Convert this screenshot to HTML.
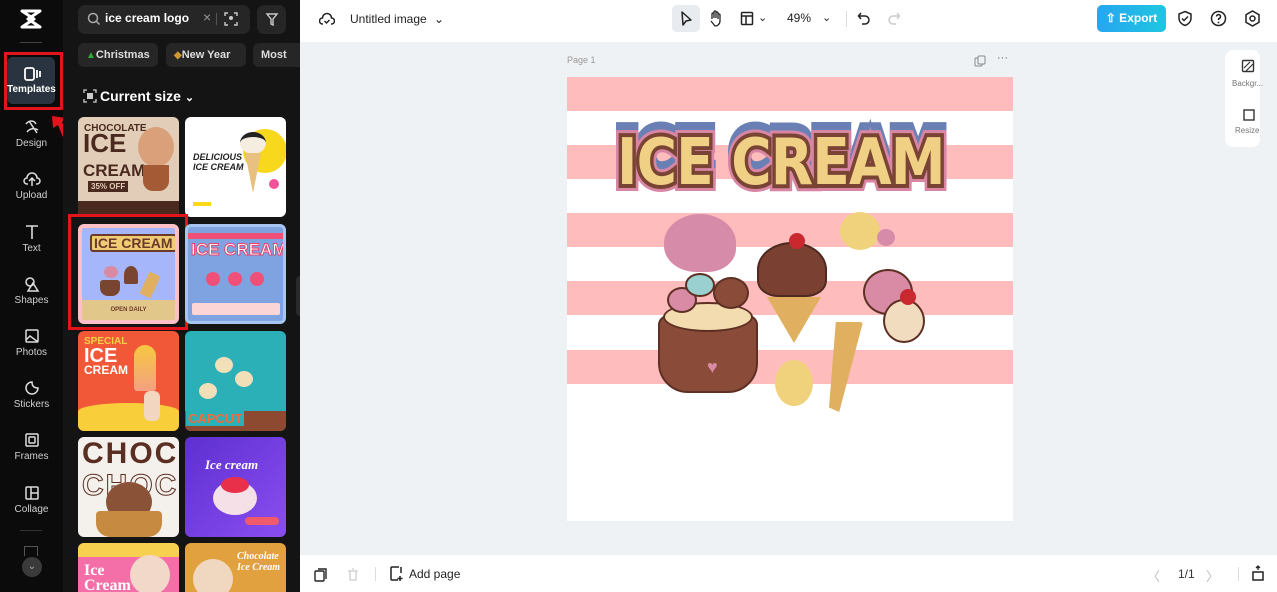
<!DOCTYPE html>
<html><head><meta charset="utf-8"><style>
*{box-sizing:border-box;margin:0;padding:0}
html,body{width:1277px;height:592px;overflow:hidden}
body{font-family:"Liberation Sans",sans-serif;background:#eff2f5;position:relative}
.abs{position:absolute}
#nav{left:0;top:0;width:63px;height:592px;background:#0b0b0b}
#panel{left:63px;top:0;width:237px;height:592px;background:#141414;overflow:hidden}
.ni{position:absolute;left:0;width:63px;text-align:center;color:#d0d0d0;font-size:10px}
.ni svg{display:block;margin:0 auto 2px}
.th{position:absolute;width:101px;height:100px;border-radius:6px;overflow:hidden}
.chip{position:absolute;top:43px;height:24px;border-radius:6px;background:#262626;color:#ddd;font-size:11px;font-weight:bold;line-height:24px;padding:0 8px;white-space:nowrap;overflow:hidden}
#top{left:300px;top:0;width:977px;height:42px;background:#fff}
#bot{left:300px;top:555px;width:977px;height:37px;background:#fff}
.stripe{position:absolute;left:0;width:446px;height:34px;background:#febcbd}
.tt{position:absolute;left:50px;top:46px;font-family:'DejaVu Sans',sans-serif;font-weight:bold;font-size:64px;line-height:80px;letter-spacing:-1px;transform:scaleX(0.86);transform-origin:0 0;white-space:nowrap}
</style></head><body>
<div id="nav" class="abs">
 <svg class="abs" style="left:19px;top:8px" width="24" height="22" viewBox="0 0 24 22"><path d="M3 3h18L9 11l12 8H3l12-8z" fill="none" stroke="#fff" stroke-width="3" stroke-linejoin="round"/></svg>
 <div class="abs" style="left:20px;top:42px;width:22px;height:1px;background:#444"></div>
 <div class="abs" style="left:4px;top:52px;width:59px;height:58px;border:3px solid #e3141c"></div>
 <div class="abs" style="left:7px;top:57px;width:48px;height:47px;border-radius:6px;background:#2a3440"></div>
 <div class="ni" style="top:66px;color:#fff;font-weight:bold;font-size:10px"><svg width="18" height="16" viewBox="0 0 18 16"><rect x="2" y="2" width="9" height="12" rx="2" fill="none" stroke="#fff" stroke-width="1.8"/><path d="M14 4v8M17 5v6" stroke="#fff" stroke-width="1.8"/></svg>Templates</div>
 <svg class="abs" style="left:48px;top:112px" width="26" height="38" viewBox="0 0 26 38"><path d="M4 4l14 2-4 4 10 22-5 3-9-22-5 3z" fill="#e3141c"/></svg>
 <div class="ni" style="top:118px"><svg width="18" height="18" viewBox="0 0 18 18"><path d="M3 6c3-4 8-4 10 0M4 14c3-4 8-4 11-2M6 3l8 12" stroke="#ddd" fill="none" stroke-width="1.5"/></svg>Design</div>
 <div class="ni" style="top:170px"><svg width="18" height="18" viewBox="0 0 18 18"><path d="M5 14H4a3 3 0 0 1 0-6 5 5 0 0 1 10 0 3 3 0 0 1 0 6h-1M9 9v7M6 11l3-3 3 3" stroke="#ddd" fill="none" stroke-width="1.5"/></svg>Upload</div>
 <div class="ni" style="top:223px"><svg width="18" height="18" viewBox="0 0 18 18"><path d="M3 3h12M9 3v13" stroke="#ddd" fill="none" stroke-width="1.6"/></svg>Text</div>
 <div class="ni" style="top:275px"><svg width="18" height="18" viewBox="0 0 18 18"><circle cx="7" cy="7" r="4" stroke="#ddd" fill="none" stroke-width="1.5"/><path d="M10 8l5 8H5z" stroke="#ddd" fill="none" stroke-width="1.5"/></svg>Shapes</div>
 <div class="ni" style="top:327px"><svg width="18" height="18" viewBox="0 0 18 18"><rect x="3" y="3" width="12" height="12" rx="1" stroke="#ddd" fill="none" stroke-width="1.5"/><path d="M3 13l4-4 8 6" stroke="#ddd" fill="none" stroke-width="1.5"/></svg>Photos</div>
 <div class="ni" style="top:379px"><svg width="18" height="18" viewBox="0 0 18 18"><path d="M15 9a6 6 0 1 1-6-6c0 4 2 6 6 6z" stroke="#ddd" fill="none" stroke-width="1.5"/></svg>Stickers</div>
 <div class="ni" style="top:431px"><svg width="18" height="18" viewBox="0 0 18 18"><rect x="3" y="3" width="12" height="12" rx="1" stroke="#ddd" fill="none" stroke-width="1.5"/><rect x="6" y="6" width="6" height="6" rx="1" stroke="#ddd" fill="none" stroke-width="1.5"/></svg>Frames</div>
 <div class="ni" style="top:484px"><svg width="18" height="18" viewBox="0 0 18 18"><rect x="3" y="3" width="12" height="12" rx="1" stroke="#ddd" fill="none" stroke-width="1.5"/><path d="M8 3v12M8 9h7" stroke="#ddd" stroke-width="1.5"/></svg>Collage</div>
 <div class="abs" style="left:20px;top:530px;width:22px;height:1px;background:#333"></div>
 <div class="abs" style="left:24px;top:546px;width:14px;height:10px;border:1.5px solid #555;border-bottom:none"></div>
 <div class="abs" style="left:22px;top:557px;width:20px;height:20px;border-radius:50%;background:#3a3a3a;color:#aaa;font-size:10px;text-align:center;line-height:20px">⌄</div>
</div>
<div id="panel" class="abs">
 <div class="abs" style="left:15px;top:5px;width:172px;height:29px;border-radius:7px;background:#262626"></div>
 <svg class="abs" style="left:24px;top:12px" width="14" height="14"><circle cx="6" cy="6" r="4.5" stroke="#aaa" fill="none" stroke-width="1.5"/><path d="M9.5 9.5l3 3" stroke="#aaa" stroke-width="1.5"/></svg>
 <div class="abs" style="left:42px;top:11px;color:#fff;font-size:12px;font-weight:bold">ice cream logo</div>
 <div class="abs" style="left:140px;top:9px;color:#999;font-size:14px">×</div>
 <div class="abs" style="left:153px;top:13px;width:1px;height:12px;background:#555"></div>
 <svg class="abs" style="left:161px;top:12px" width="14" height="14"><path d="M1 4V1h3M10 1h3v3M13 10v3h-3M4 13H1v-3" stroke="#ccc" fill="none" stroke-width="1.4"/><circle cx="7" cy="6" r="2" fill="#ccc"/></svg>
 <div class="abs" style="left:194px;top:5px;width:29px;height:29px;border-radius:7px;background:#262626"></div>
 <svg class="abs" style="left:201px;top:12px" width="15" height="15"><path d="M3 2h10l-4 5v6l-2-1V7z" stroke="#ccc" fill="none" stroke-width="1.4"/></svg>
 <div class="chip" style="left:15px;width:80px"><span style="color:#3a3;font-size:10px">▲</span>Christmas</div>
 <div class="chip" style="left:103px;width:80px"><span style="color:#c93;font-size:10px">◆</span>New Year</div>
 <div class="chip" style="left:190px;width:60px">Most</div>
 <svg class="abs" style="left:20px;top:89px" width="14" height="14"><path d="M1 4V1h3M10 1h3v3M13 10v3h-3M4 13H1v-3" stroke="#ccc" fill="none" stroke-width="1.3"/><rect x="4" y="4" width="6" height="6" fill="#ccc"/></svg>
 <div class="abs" style="left:37px;top:88px;color:#fff;font-size:14px;font-weight:bold">Current size <span style="font-size:11px">⌄</span></div>
 <div class="th" style="left:15px;top:117px;background:#e2cdb8">
  <div style="position:absolute;left:6px;top:6px;color:#4a2a1e;font-weight:900;font-size:10px">CHOCOLATE</div>
  <div style="position:absolute;left:5px;top:14px;color:#4a2a1e;font-weight:900;font-size:26px;line-height:24px">ICE<br><span style="font-size:17px">CREAM</span></div>
  <div style="position:absolute;left:10px;top:64px;background:#4a2a1e;color:#e2cdb8;font-size:8px;font-weight:bold;padding:1px 3px">35% OFF</div>
  <div style="position:absolute;left:60px;top:10px;width:36px;height:40px;border-radius:50%;background:#d9a07a"></div>
  <div style="position:absolute;left:65px;top:48px;width:26px;height:26px;background:#a35a35;border-radius:0 0 10px 10px"></div>
  <div style="position:absolute;left:0;top:84px;width:101px;height:16px;background:#4a2a1e"></div>
 </div>
 <div class="th" style="left:122px;top:117px;background:#fff">
  <div style="position:absolute;left:58px;top:12px;width:44px;height:44px;border-radius:50%;background:#f8d81c"></div>
  <div style="position:absolute;left:8px;top:35px;font-style:italic;font-weight:900;font-size:9px;color:#222;line-height:10px">DELICIOUS<br>ICE CREAM</div>
  <div style="position:absolute;left:55px;top:15px;width:26px;height:22px;border-radius:50%;background:#f4ede0;border-top:5px solid #222"></div>
  <div style="position:absolute;left:60px;top:36px;width:0;height:0;border-left:8px solid transparent;border-right:8px solid transparent;border-top:40px solid #e8c080"></div>
  <div style="position:absolute;left:84px;top:62px;width:10px;height:10px;border-radius:50%;background:#f4539a"></div>
  <div style="position:absolute;left:8px;top:85px;width:18px;height:4px;background:#f8d81c"></div>
 </div>
 <div class="abs" style="left:5px;top:214px;width:120px;height:116px;border:3px solid #e3141c"></div>
 <div class="th" style="left:15px;top:224px;background:#a5b7fa;border:4px solid #fec0c5">
  <div style="position:absolute;left:8px;top:6px;background:#f0cc74;color:#6b3a2a;font-weight:900;font-size:14px;padding:0 2px;border:2px solid #6b3a2a;border-radius:3px;line-height:14px;white-space:nowrap">ICE CREAM</div>
  <div style="position:absolute;left:22px;top:38px;width:14px;height:12px;border-radius:50%;background:#d98aa5"></div>
  <div style="position:absolute;left:18px;top:52px;width:20px;height:16px;border-radius:3px 3px 8px 8px;background:#7a4530"></div>
  <div style="position:absolute;left:42px;top:38px;width:14px;height:18px;border-radius:50% 50% 2px 2px;background:#7a4530"></div>
  <div style="position:absolute;left:62px;top:45px;width:12px;height:24px;background:#e0b060;transform:rotate(25deg)"></div>
  <div style="position:absolute;left:0;top:72px;width:93px;height:20px;background:#e2c78a;font-size:6px;font-weight:bold;color:#6b3a2a;text-align:center;line-height:20px">OPEN DAILY</div>
 </div>
 <div class="th" style="left:122px;top:224px;background:#7fa3e0;border:3px solid #a8c4f0">
  <div style="position:absolute;left:0;top:6px;width:96px;height:6px;background:#f05078"></div>
  <div style="position:absolute;left:3px;top:13px;color:#fff;font-weight:900;font-size:17px;-webkit-text-stroke:1px #e8446e;line-height:20px;white-space:nowrap">ICE CREAM</div>
  <div style="position:absolute;left:18px;top:45px;width:14px;height:14px;border-radius:50%;background:#f05078"></div>
  <div style="position:absolute;left:40px;top:45px;width:14px;height:14px;border-radius:50%;background:#f05078"></div>
  <div style="position:absolute;left:62px;top:45px;width:14px;height:14px;border-radius:50%;background:#f05078"></div>
  <div style="position:absolute;left:4px;top:76px;width:88px;height:12px;background:#fcd6d6;border-radius:2px"></div>
 </div>
 <div class="th" style="left:15px;top:331px;background:#f05838">
  <div style="position:absolute;left:6px;top:6px;color:#f8d04a;font-weight:900;font-size:10px;line-height:10px">SPECIAL<br><span style="color:#fff;font-size:20px;line-height:18px">ICE</span><br><span style="color:#fff;font-size:12px">CREAM</span></div>
  <div style="position:absolute;left:56px;top:14px;width:22px;height:46px;border-radius:11px 11px 3px 3px;background:linear-gradient(#f7c840,#f3a080)"></div>
  <div style="position:absolute;left:0;top:72px;width:101px;height:28px;background:#f8cf3a;border-radius:50% 50% 0 0/30% 30% 0 0"></div>
  <div style="position:absolute;left:66px;top:60px;width:16px;height:30px;background:#f3d6c0;border-radius:6px"></div>
 </div>
 <div class="th" style="left:122px;top:331px;background:#2cb0b8">
  <div style="position:absolute;left:30px;top:26px;width:18px;height:16px;border-radius:50%;background:#f1dfb8"></div>
  <div style="position:absolute;left:50px;top:40px;width:18px;height:16px;border-radius:50%;background:#f1dfb8"></div>
  <div style="position:absolute;left:14px;top:52px;width:18px;height:16px;border-radius:50%;background:#f1dfb8"></div>
  <div style="position:absolute;left:0;top:80px;width:101px;height:20px;background:#8e4a30"></div>
  <div style="position:absolute;left:1px;top:80px;color:#f26c3c;font-weight:900;font-size:13px;background:#2cb0b8;padding:0 2px">CAPCUT</div>
 </div>
 <div class="th" style="left:15px;top:437px;background:#f4f0ec">
  <div style="position:absolute;left:4px;top:0;color:#5a2f22;font-weight:900;font-size:30px;letter-spacing:2px;white-space:nowrap">CHOCO</div>
  <div style="position:absolute;left:4px;top:32px;color:#f4f0ec;-webkit-text-stroke:1px #5a2f22;font-weight:900;font-size:30px;letter-spacing:2px;white-space:nowrap">CHOCO</div>
  <div style="position:absolute;left:28px;top:45px;width:46px;height:40px;border-radius:50%;background:#8a5338"></div>
  <div style="position:absolute;left:18px;top:74px;width:66px;height:26px;background:#c68b40;border-radius:4px 4px 14px 14px"></div>
 </div>
 <div class="th" style="left:122px;top:437px;background:linear-gradient(135deg,#5e2fd0,#8a4ef0)">
  <div style="position:absolute;left:20px;top:20px;color:#fff;font-style:italic;font-weight:bold;font-size:13px;font-family:'Liberation Serif',serif">Ice cream</div>
  <div style="position:absolute;left:28px;top:44px;width:44px;height:34px;border-radius:50%;background:#f5e0e8"></div>
  <div style="position:absolute;left:36px;top:40px;width:28px;height:16px;border-radius:50%;background:#e8304a"></div>
  <div style="position:absolute;left:60px;top:80px;width:34px;height:8px;border-radius:4px;background:#f05a6a"></div>
 </div>
 <div class="th" style="left:15px;top:543px;height:49px;border-radius:6px 6px 0 0;background:#f46fa8">
  <div style="position:absolute;left:0;top:0;width:101px;height:14px;background:#f8d050"></div>
  <div style="position:absolute;left:6px;top:20px;color:#fff;font-weight:900;font-size:16px;line-height:15px;font-family:'Liberation Serif',serif">Ice<br>Cream</div>
  <div style="position:absolute;left:52px;top:12px;width:40px;height:40px;border-radius:50%;background:#f2d8c8"></div>
 </div>
 <div class="th" style="left:122px;top:543px;height:49px;border-radius:6px 6px 0 0;background:#e2a13f">
  <div style="position:absolute;left:52px;top:8px;color:#fff;font-style:italic;font-weight:bold;font-size:10px;line-height:11px;font-family:'Liberation Serif',serif">Chocolate<br>Ice Cream</div>
  <div style="position:absolute;left:8px;top:16px;width:40px;height:40px;border-radius:50%;background:#f0d8c0"></div>
 </div>
 <div class="abs" style="left:233px;top:276px;width:8px;height:40px;border-radius:4px;background:#2a2a2a"></div>
</div>
<div id="top" class="abs">
 <svg class="abs" style="left:19px;top:11px" width="16" height="16" viewBox="0 0 16 16"><path d="M4 13H3.5a3 3 0 0 1 0-6 4.5 4.5 0 0 1 9 0 3 3 0 0 1 0 6H12M5.5 10l2 2 3-3" stroke="#222" fill="none" stroke-width="1.5"/></svg>
 <div class="abs" style="left:50px;top:12px;font-size:12px;color:#222">Untitled image <span style="margin-left:4px">⌄</span></div>
 <div class="abs" style="left:372px;top:5px;width:28px;height:27px;border-radius:5px;background:#e8ebef"></div>
 <svg class="abs" style="left:379px;top:10px" width="14" height="17"><path d="M3 2l9 8-5 1-3 4z" stroke="#222" fill="none" stroke-width="1.5" stroke-linejoin="round"/></svg>
 <svg class="abs" style="left:408px;top:9px" width="16" height="18"><path d="M4 10V5a1 1 0 0 1 2 0v4V3a1 1 0 0 1 2 0v6V4a1 1 0 0 1 2 0v6V6a1 1 0 0 1 2 0v6a5 5 0 0 1-5 5H7l-4-5" stroke="#222" fill="none" stroke-width="1.3"/></svg>
 <svg class="abs" style="left:440px;top:11px" width="14" height="15"><rect x="1.5" y="1.5" width="11" height="12" rx="1" stroke="#222" fill="none" stroke-width="1.5"/><path d="M1.5 5h11M6 5v8.5" stroke="#222" stroke-width="1.5"/></svg>
 <div class="abs" style="left:458px;top:11px;font-size:11px;color:#222">⌄</div>
 <div class="abs" style="left:487px;top:11px;font-size:12px;color:#222">49%</div>
 <div class="abs" style="left:522px;top:11px;font-size:11px;color:#222">⌄</div>
 <div class="abs" style="left:546px;top:11px;width:1px;height:16px;background:#ddd"></div>
 <svg class="abs" style="left:557px;top:11px" width="14" height="15"><path d="M4 2L1.5 5 4 8M2 5h6a4 4 0 0 1 0 8H5" stroke="#222" fill="none" stroke-width="1.5"/></svg>
 <svg class="abs" style="left:587px;top:11px" width="14" height="15"><path d="M10 2l2.5 3L10 8M12 5H6a4 4 0 0 0 0 8h3" stroke="#ccc" fill="none" stroke-width="1.5"/></svg>
 <div class="abs" style="left:797px;top:5px;width:69px;height:27px;border-radius:5px;background:linear-gradient(90deg,#26a6f0,#1ec6e0);color:#fff;font-size:12px;font-weight:bold;line-height:27px;text-align:center">⇧ Export</div>
 <svg class="abs" style="left:877px;top:10px" width="16" height="17"><path d="M8 1.5l6 2.5v4c0 4-3 6.5-6 7.5-3-1-6-3.5-6-7.5V4z" stroke="#222" fill="none" stroke-width="1.5"/><path d="M5 8.5l2 2 4-4" stroke="#222" fill="none" stroke-width="1.5"/></svg>
 <svg class="abs" style="left:910px;top:10px" width="17" height="17"><circle cx="8.5" cy="8.5" r="7" stroke="#222" fill="none" stroke-width="1.5"/><path d="M6.5 6.5a2 2 0 1 1 2.5 2c-.5.2-.5.6-.5 1.5" stroke="#222" fill="none" stroke-width="1.5"/><circle cx="8.5" cy="12.5" r=".9" fill="#222"/></svg>
 <svg class="abs" style="left:944px;top:10px" width="17" height="17"><path d="M8.5 1l6.5 3.7v7.6L8.5 16 2 12.3V4.7z" stroke="#222" fill="none" stroke-width="1.5"/><circle cx="8.5" cy="8.5" r="2.5" stroke="#222" fill="none" stroke-width="1.5"/></svg>
</div>
<div class="abs" style="left:567px;top:55px;font-size:9px;color:#999">Page 1</div>
<svg class="abs" style="left:974px;top:55px" width="12" height="12"><rect x="1" y="3" width="7" height="8" rx="1" stroke="#888" fill="none"/><rect x="4" y="1" width="7" height="8" rx="1" stroke="#888" fill="#eff2f5"/></svg>
<div class="abs" style="left:997px;top:52px;font-size:11px;color:#666">···</div>
<div class="abs" style="left:1225px;top:50px;width:35px;height:97px;border-radius:8px;background:#fff"></div>
<svg class="abs" style="left:1241px;top:59px" width="15" height="15"><rect x="1.5" y="1.5" width="11" height="11" rx="1" stroke="#333" fill="none" stroke-width="1.4"/><path d="M3 9l6-6M5 12l7-7" stroke="#333" stroke-width="1.2"/></svg>
<div class="abs" style="left:1232px;top:79px;font-size:8px;color:#777">Backgr...</div>
<svg class="abs" style="left:1242px;top:108px" width="14" height="14"><rect x="2" y="2" width="10" height="10" stroke="#333" fill="none" stroke-width="1.4"/></svg>
<div class="abs" style="left:1235px;top:126px;font-size:8px;color:#777">Resize</div>
<div class="abs" style="left:567px;top:77px;width:446px;height:444px;background:#fff;overflow:hidden">
 <div class="stripe" style="top:0"></div><div class="stripe" style="top:68px"></div><div class="stripe" style="top:136px"></div><div class="stripe" style="top:204px"></div><div class="stripe" style="top:273px"></div>
 <div class="tt" style="top:38px;color:#6a80b5;-webkit-text-stroke:14px #6a80b5">ICE CREAM</div>
 <div class="tt" style="color:#d986a5;-webkit-text-stroke:14px #d986a5">ICE CREAM</div>
 <div class="tt" style="color:#f0d084;-webkit-text-stroke:8px #7a4434;paint-order:stroke">ICE CREAM</div>
 <div style="position:absolute;left:97px;top:137px;width:72px;height:58px;border-radius:50% 50% 40% 45%;background:#d68ca8"></div>
 <div style="position:absolute;left:273px;top:135px;width:40px;height:38px;border-radius:50%;background:#f0d27c"></div>
 <div style="position:absolute;left:310px;top:152px;width:18px;height:17px;border-radius:50%;background:#d68ca8"></div>
 <div style="position:absolute;left:208px;top:283px;width:38px;height:46px;border-radius:50%;background:#f0d27c"></div>
 <div style="position:absolute;left:91px;top:238px;width:100px;height:78px;border-radius:10px 10px 30px 30px;background:#8a4c38;border:2px solid #5e3024"></div>
 <div style="position:absolute;left:96px;top:225px;width:90px;height:30px;border-radius:50%;background:#f2dcb0;border:2px solid #5e3024"></div>
 <div style="position:absolute;left:100px;top:210px;width:30px;height:26px;border-radius:50%;background:#d98aa5;border:2px solid #5e3024"></div>
 <div style="position:absolute;left:118px;top:196px;width:30px;height:24px;border-radius:50%;background:#9ad0d0;border:2px solid #5e3024"></div>
 <div style="position:absolute;left:146px;top:200px;width:36px;height:32px;border-radius:50%;background:#8a4c38;border:2px solid #5e3024"></div>
 <div style="position:absolute;left:140px;top:280px;color:#d98aa5;font-size:18px">♥</div>
 <div style="position:absolute;left:190px;top:165px;width:70px;height:55px;border-radius:50% 50% 30% 30%;background:#7a4032;border:2px solid #4e2a20"></div>
 <div style="position:absolute;left:222px;top:156px;width:16px;height:16px;border-radius:50%;background:#c8282e"></div>
 <div style="position:absolute;left:200px;top:220px;width:0;height:0;border-left:27px solid transparent;border-right:27px solid transparent;border-top:46px solid #e0b060"></div>
 <div style="position:absolute;left:296px;top:192px;width:50px;height:46px;border-radius:50%;background:#d98aa5;border:2px solid #5e3024"></div>
 <div style="position:absolute;left:316px;top:222px;width:42px;height:44px;border-radius:50%;background:#f2dcc0;border:2px solid #5e3024"></div>
 <div style="position:absolute;left:333px;top:212px;width:16px;height:16px;border-radius:50%;background:#c8282e"></div>
 <div style="position:absolute;left:262px;top:245px;width:34px;height:90px;background:#e0b060;clip-path:polygon(20% 0,100% 0,30% 100%,0 95%);border-radius:3px"></div>
</div>
<div id="bot" class="abs">
 <svg class="abs" style="left:14px;top:13px" width="14" height="14"><rect x="1" y="3" width="9" height="10" rx="1" stroke="#222" fill="none" stroke-width="1.4"/><path d="M4 1h8v10" stroke="#222" fill="none" stroke-width="1.4"/></svg>
 <svg class="abs" style="left:47px;top:13px" width="12" height="14"><path d="M1 3h10M3 3v9h6V3M5 1h2" stroke="#ccc" fill="none" stroke-width="1.3"/></svg>
 <div class="abs" style="left:75px;top:12px;width:1px;height:14px;background:#ddd"></div>
 <svg class="abs" style="left:89px;top:11px" width="16" height="16"><path d="M10 1H3a1 1 0 0 0-1 1v11a1 1 0 0 0 1 1h6M11 10v5M8.5 12.5h5M12 1v6" stroke="#222" fill="none" stroke-width="1.5"/></svg>
 <div class="abs" style="left:109px;top:12px;font-size:12px;color:#222">Add page</div>
 <div class="abs" style="left:847px;top:11px;font-size:13px;color:#bbb">〈</div>
 <div class="abs" style="left:878px;top:12px;font-size:12px;color:#333">1/1</div>
 <div class="abs" style="left:906px;top:11px;font-size:13px;color:#bbb">〉</div>
 <div class="abs" style="left:938px;top:12px;width:1px;height:14px;background:#ddd"></div>
 <svg class="abs" style="left:951px;top:10px" width="14" height="17"><rect x="2" y="7" width="10" height="8" stroke="#222" fill="none" stroke-width="1.5"/><path d="M7 1v4M5 3l2-2 2 2" stroke="#222" fill="none" stroke-width="1.3"/></svg>
</div>
</body></html>
